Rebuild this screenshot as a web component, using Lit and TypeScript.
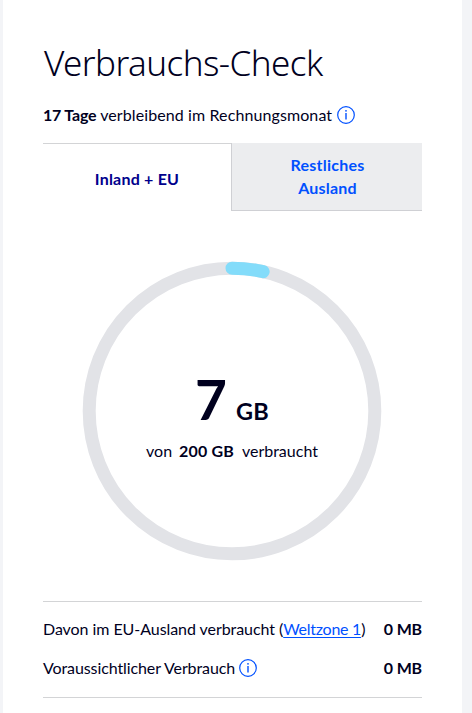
import { LitElement, html, css, svg } from "lit";
import { customElement, property } from "lit/decorators.js";

@customElement("info-icon")
class InfoIcon extends LitElement {
  static styles = css`
    :host { display: inline-block; width: 18px; height: 18px; flex: none; }
    svg { display: block; }
  `;
  render() {
    return html`<svg width="18" height="18" viewBox="0 0 18 18" fill="none" stroke="#0050ff">
      <circle cx="9" cy="9" r="8.3" stroke-width="1.2" />
      <path d="M9 7V13.4" stroke-width="1.4" />
      <circle cx="9" cy="4.8" r=".9" fill="#0050ff" stroke="none" />
    </svg>`;
  }
}

@customElement("usage-ring")
class UsageRing extends LitElement {
  @property({ type: Number }) used = 0;
  @property({ type: Number }) total = 1;

  static styles = css`
    :host { display: grid; width: 300px; height: 300px; }
    svg, .label { grid-area: 1 / 1; }
    .label { display: flex; flex-direction: column; align-items: center; padding-top: 110px; }
    .amount { display: flex; align-items: baseline; font-weight: 700; height: 57px; line-height: 57px; }
    .value { font-size: 55px; }
    .unit { font-size: 23.5px; margin-left: 9px; letter-spacing: .2px; }
    .detail { display: flex; line-height: 24px; margin-top: 11px; font-size: 16px; }
    b { margin: 0 8px 0 7px; letter-spacing: .15px; }
  `;
  render() {
    const r = 142.8;
    const a = (this.used / this.total) * Math.PI * 2;
    const x = 150 + r * Math.sin(a);
    const y = 150 - r * Math.cos(a);
    return html`
      <svg width="300" height="300" fill="none" stroke-width="13">
        <circle cx="150" cy="150" r=${r} stroke="#e2e3e7" />
        ${svg`<path d="M150 ${150 - r}A${r} ${r} 0 0 1 ${x} ${y}" stroke="#83dcfa" stroke-linecap="round" />`}
      </svg>
      <div class="label">
        <div class="amount"><span class="value">${this.used}</span><span class="unit">GB</span></div>
        <div class="detail"><span>von</span><b>${this.total} GB</b><span>verbraucht</span></div>
      </div>
    `;
  }
}

@customElement("app-root")
class AppRoot extends LitElement {
  static styles = css`
    :host {
      display: block; box-sizing: border-box; width: 472px; height: 713px; overflow: hidden;
      padding: 0 10px 0 3px; background: #f3f4f7; color: #00001e;
      font: 400 16px/24px "Lato", "Noto Sans", sans-serif;
    }
    .card { box-sizing: border-box; height: 713px; background: #fff; padding: 39px 40px 0; }
    h1 { margin: 0 0 0 1px; font: 300 35px/48px "Noto Sans", sans-serif; letter-spacing: -.56px; white-space: nowrap; }
    .remaining { display: flex; align-items: center; margin-top: 15px; height: 26px; white-space: pre; letter-spacing: .1px; }
    .remaining b { letter-spacing: -.2px; }
    .remaining info-icon { margin-left: 4.5px; }
    .tabs { display: grid; grid-template-columns: 188px 191px; height: 68px; margin-top: 15px; }
    .tab { display: flex; align-items: center; justify-content: center; text-align: center; font-weight: 700; line-height: 23px; letter-spacing: .22px; box-sizing: border-box; }
    .active { border-top: 1px solid #d3d4d6; color: #00008c; padding-top: 2px; }
    .other { background: #ecedef; border-left: 1px solid #cfd0d4; border-bottom: 1px solid #cfd0d4; color: #0050ff; padding: 0 0 1px 1px; }
    usage-ring { margin: 50px 0 0 39px; }
    .rows { margin-top: 40px; border-top: 1px solid #d3d4d6; border-bottom: 1px solid #d3d4d6; padding-top: 7px; height: 88px; }
    .row { display: flex; justify-content: space-between; align-items: center; height: 39px; white-space: nowrap; }
    .row b { letter-spacing: -.15px; }
    .name { display: flex; align-items: center; white-space: pre; letter-spacing: -.1px; }
    .long { letter-spacing: -.06px; }
    .name info-icon { margin-left: 4px; }
    a { color: #0050ff; text-decoration: underline; text-underline-offset: 2px; letter-spacing: -.26px; }
  `;
  render() {
    return html`<main class="card">
      <h1>Verbrauchs-Check</h1>
      <div class="remaining"><b>17 Tage</b><span> verbleibend im Rechnungsmonat</span><info-icon></info-icon></div>
      <div class="tabs">
        <div class="tab active"><span>Inland + EU</span></div>
        <div class="tab other"><span>Restliches<br />Ausland</span></div>
      </div>
      <usage-ring used="7" total="200"></usage-ring>
      <div class="rows">
        <div class="row"><span class="name long">Davon im EU-Ausland verbraucht (<a>Weltzone 1</a>)</span><b>0 MB</b></div>
        <div class="row"><span class="name">Voraussichtlicher Verbrauch<info-icon></info-icon></span><b>0 MB</b></div>
      </div>
    </main>`;
  }
}
